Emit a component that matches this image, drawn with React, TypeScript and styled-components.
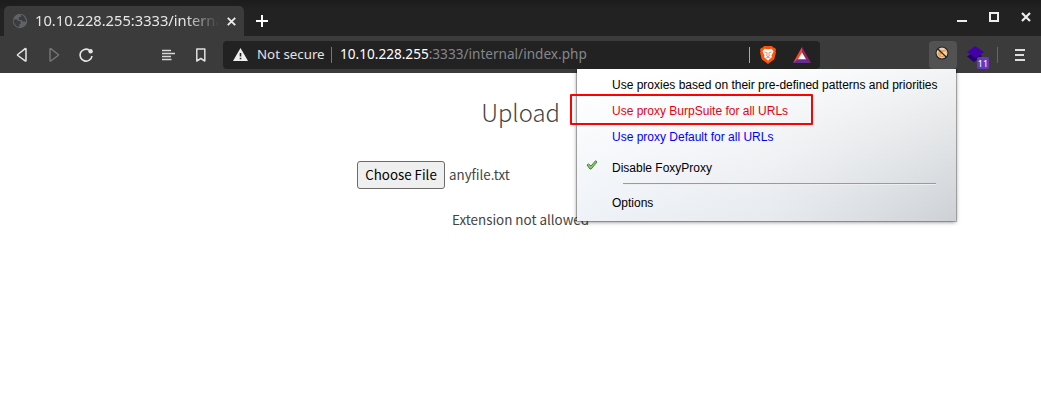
import React from 'react';
import styled, { createGlobalStyle } from 'styled-components';

const GlobalStyle = createGlobalStyle`
  * { box-sizing: border-box; }
  html, body, #root { height: 100%; }
  body { margin: 0; background: #fff; overflow: hidden; font-family: "Noto Sans", sans-serif; }
  svg { display: block; flex: none; }
`;

const Browser = styled.div`
  position: relative;
  width: 1041px;
  height: 415px;
  background: #fff;
`;

const TabStrip = styled.div`
  display: flex;
  align-items: flex-end;
  height: 36px;
  padding-left: 4px;
  background: linear-gradient(#1c1c1c, #222 10px, #222);
`;

const Tab = styled.div`
  display: flex;
  align-items: center;
  width: 240px;
  height: 30px;
  padding: 0 6px 0 8px;
  border-radius: 5px 5px 0 0;
  background: #3b3b3b;
`;

const TabTitle = styled.div`
  width: 185px;
  margin: 0 7px 2px 7px;
  white-space: nowrap;
  font-size: 14.7px;
  line-height: 28px;
  color: #e6e6e6;
  mask-image: linear-gradient(to right, #000 150px, transparent 184px);
`;

const NewTab = styled.div`
  margin: 0 auto 9px 12px;
`;

const WindowButtons = styled.div`
  display: flex;
  gap: 20px;
  padding: 0 9px 12px 0;
`;

const Toolbar = styled.div`
  display: flex;
  align-items: center;
  height: 37px;
  padding: 0 12px 0 14px;
  background: #3b3b3b;
`;

const NavButtons = styled.div`
  display: flex;
  align-items: center;
  gap: 16px;
`;

const PageButtons = styled(NavButtons)`
  margin: 0 14px 0 66px;
`;

const AddressBar = styled.div`
  display: flex;
  align-items: center;
  width: 597px;
  height: 28px;
  padding: 0 9px 0 10px;
  border-radius: 4px;
  background: #222;
  line-height: 26px;
  white-space: nowrap;
`;

const Security = styled.span`
  flex: none;
  width: 74px;
  margin: 0 0 2px 9px;
  color: #e4e4e4;
  font-size: 13.3px;
`;

const Separator = styled.span<{ $tone: string }>`
  flex: none;
  width: 1px;
  height: 16px;
  background: ${(p) => p.$tone};
`;

const Url = styled.span`
  flex: 1;
  margin: 0 0 2px 8px;
  color: #85878a;
  font-size: 13.6px;
`;

const Host = styled.span`
  color: #fff;
`;

const Shields = styled.div`
  display: flex;
  align-items: center;
  gap: 17px;
  margin-left: 10px;
`;

const Extensions = styled.div`
  display: flex;
  align-items: center;
  margin-left: auto;
`;

const ExtensionButton = styled.div`
  display: flex;
  align-items: center;
  justify-content: center;
  width: 28px;
  height: 28px;
  padding: 0 2px 3px 0;
  border-radius: 4px;
  background: #525252;
`;

const BadgedIcon = styled.div`
  position: relative;
  width: 23px;
  height: 28px;
  padding-top: 5px;
  margin: 0 7px 0 10px;
`;

const Badge = styled.span`
  position: absolute;
  left: 10px;
  top: 16px;
  width: 12px;
  height: 12px;
  border-radius: 2px;
  background: #6739b7;
  color: #fff;
  font: 9px/13px "Noto Sans", sans-serif;
  text-align: center;
`;

const MenuIcon = styled.div`
  margin: 0 4px 0 17px;
`;

const Page = styled.main`
  display: flex;
  flex-direction: column;
  align-items: center;
  padding-top: 21px;
  font-family: "Noto Sans CJK JP", sans-serif;
  color: #444;
`;

const Heading = styled.h1`
  margin: 0;
  font-size: 23.8px;
  line-height: 36px;
  font-weight: 300;
`;

const FileField = styled.div`
  display: flex;
  align-items: center;
  gap: 4px;
  width: 327px;
  margin-top: 31px;
  font-size: 13.333px;
  line-height: 26px;
`;

const FileButton = styled.button`
  width: 88px;
  height: 28px;
  padding: 0;
  border: 1px solid #6b6b6b;
  border-radius: 3px;
  background: #efefef;
  color: #000;
  font: 13.333px/24px "Noto Sans CJK JP", sans-serif;
  white-space: nowrap;
`;

const Message = styled.p`
  margin: 17px 0 0;
  font-size: 13.4px;
  line-height: 26px;
`;

const Popup = styled.div`
  position: absolute;
  left: 577px;
  top: 69px;
  width: 379px;
  height: 152px;
  padding-top: 3px;
  background: linear-gradient(170deg, #fff 8%, rgba(255, 255, 255, 0) 100%),
    linear-gradient(to right, #e6ecf4, #e2e6eb 50%, #cdd1d5);
  box-shadow: 0 0 0 1px rgba(0, 0, 0, 0.22), 0 1px 4px rgba(0, 0, 0, 0.5);
  clip-path: inset(0 -8px -8px -8px);
  font-family: "Liberation Sans", Arial, sans-serif;
  font-size: 12px;
`;

const MenuItem = styled.div<{ $color?: string; $gap?: number }>`
  display: flex;
  align-items: center;
  height: 26px;
  margin-top: ${(p) => p.$gap ?? 0}px;
  color: ${(p) => p.$color ?? '#000'};
  white-space: nowrap;
`;

const Mark = styled.span`
  width: 35px;
  padding: 0 0 7px 9px;
`;

const Rule = styled.hr`
  width: 313px;
  height: 2px;
  margin: 2px 0 0 46px;
  border: 0;
  border-top: 1px solid #9a9a9a;
  border-bottom: 1px solid #eee;
`;

const Highlight = styled.div`
  position: absolute;
  left: 570px;
  top: 94px;
  width: 243px;
  height: 31px;
  border: 2px solid #f00;
  border-radius: 1px;
`;

const Globe = () => (
  <svg width="16" height="16" viewBox="0 0 16 16">
    <circle cx="8" cy="8" r="7.2" fill="#5f6368" />
    <path d="M1.8 6.6h3.1l1.8 1.7h2v2.1l-1.4 1v2.6C4.3 14 1.2 10.8 1.8 6.6ZM8.8 1.7l.4 2-1.7.4-1 1.5.8 1.3h2.4l1 1.5 3.2.4c.3-2.6-1.8-6.7-5.1-7.1Z" fill="#3b3b3b" />
  </svg>
);

const Brave = () => (
  <svg width="16" height="18" viewBox="0 0 16 18">
    <path d="m4 0-1.2 1.6L.9 2 0 4l.6 1.6L0 6l1.7 7.2L8 18l6.3-4.8L16 6l-.6-.4L16 4l-.9-2-1.9-.4L12 0Z" fill="#fb5410" />
    <path d="M4.5 2.7 8 3.2l3.5-.5 2 2.5-.9 2-1.2 2.5.7 1.2-2.3 2L8 14.7l-1.8-1.8-2.3-2 .7-1.2-1.2-2.5-.9-2Z" fill="#fff" />
    <path d="m4.5 6 2.3.6.3 1.2-.5 2L8 10.6l1.4-.8-.5-2 .3-1.2 2.3-.6M6 12l2-.8 2 .8" fill="none" stroke="#fb5410" strokeWidth=".7" />
  </svg>
);

const Rewards = () => (
  <svg width="18" height="16" viewBox="0 0 18 16">
    <path d="M9 0 0 16l6-4 3-6Z" fill="#ff4724" />
    <path d="m9 0 9 16-5.5-4L9 6Z" fill="#9e1f63" />
    <path d="M0 16h18l-5-4H5Z" fill="#662d91" />
    <path d="m9 5.5 4 6.8H5Z" fill="#fff" />
  </svg>
);

const Fox = () => (
  <svg width="14" height="14" viewBox="0 0 14 14">
    <circle cx="7" cy="7" r="6" fill="#ddd6c8" stroke="#252525" strokeWidth="1.1" />
    <path d="M3.4 2.5 6 4h3l2-.8.6 3-1.2 3.1-2.1 2.3-3.7-.5L2.2 8l1.5-1.8Z" fill="#f0a04c" />
    <path d="m8 6 3-1v3L8.5 9.8 5.5 10" fill="#fff" fillOpacity=".5" />
    <path d="m2.6 2.8 8.8 8.5" stroke="#252525" strokeWidth="1.2" />
  </svg>
);

const Layers = () => (
  <svg width="17" height="16" viewBox="0 0 17 16">
    <path d="m0 10.5 7 5.5 8-6-3-2H4Z" fill="#24006b" />
    <path d="m8 0 9 6-8.5 6L0 6.2Z" fill="#4300a8" />
  </svg>
);

export default function App() {
  return (
    <Browser>
      <GlobalStyle />
      <TabStrip>
        <Tab>
          <Globe />
          <TabTitle>10.10.228.255:3333/interna</TabTitle>
          <svg width="9" height="9" viewBox="0 0 9 9" stroke="#eee" strokeWidth="1.8">
            <path d="m.8.8 7.4 7.4m0-7.4L.8 8.2" />
          </svg>
        </Tab>
        <NewTab>
          <svg width="12" height="12" viewBox="0 0 12 12" stroke="#fff" strokeWidth="2">
            <path d="M6 0v12M0 6h12" />
          </svg>
        </NewTab>
        <WindowButtons>
          <svg width="12" height="14" viewBox="0 0 12 14"><path d="M1 10h10v2H1z" fill="#eee" /></svg>
          <svg width="12" height="14" viewBox="0 0 12 14"><path d="M2 3h8v8H2z" fill="none" stroke="#eee" strokeWidth="2" /></svg>
          <svg width="12" height="14" viewBox="0 0 12 14"><path d="m2 3 8 8m0-8-8 8" stroke="#eee" strokeWidth="2.2" /></svg>
        </WindowButtons>
      </TabStrip>
      <Toolbar>
        <NavButtons>
          <svg width="16" height="16" viewBox="0 0 16 16" fill="none" stroke="#e6e6e6" strokeWidth="1.5" strokeLinejoin="round"><path d="M12 2.2v11.3q0 .8-.8.3L3.8 8.5q-.6-.5 0-1l7.4-5.8q.8-.5.8.5Z" /></svg>
          <svg width="16" height="16" viewBox="0 0 16 16" fill="none" stroke="#747474" strokeWidth="1.5" strokeLinejoin="round"><path d="M4 2.2v11.3q0 .8.8.3l7.4-5.3q.6-.5 0-1L4.8 1.7Q4 1.2 4 2.2Z" /></svg>
          <svg width="16" height="16" viewBox="0 0 16 16"><path d="M11.2 3A6 6 0 1 0 14 9" fill="none" stroke="#e6e6e6" strokeWidth="1.6" /><circle cx="12.6" cy="4.3" r="2.2" fill="#e6e6e6" /></svg>
        </NavButtons>
        <PageButtons>
          <svg width="16" height="16" viewBox="0 0 16 16" stroke="#d8d8d8" strokeWidth="1.3"><path d="M2 3.5h9M2 6.5h13M2 9.5h9M2 12.5h9.5" /></svg>
          <svg width="17" height="16" viewBox="0 0 17 16" fill="none" stroke="#e0e0e0" strokeWidth="1.5" strokeLinejoin="round"><path d="M4.8 2h8v12l-4-2.5-4 2.5Z" /></svg>
        </PageButtons>
        <AddressBar>
          <svg width="15" height="14" viewBox="0 0 15 14"><path d="M7.5 0 15 13H0Z" fill="#eee" /><path d="M6.7 5h1.6v3.5H6.7zm0 4.7h1.6v1.6H6.7z" fill="#222" /></svg>
          <Security>Not secure</Security>
          <Separator $tone="#777" />
          <Url><Host>10.10.228.255</Host>:3333/internal/index.php</Url>
          <Separator $tone="#aaa" />
          <Shields><Brave /><Rewards /></Shields>
        </AddressBar>
        <Extensions>
          <ExtensionButton><Fox /></ExtensionButton>
          <BadgedIcon><Layers /><Badge>11</Badge></BadgedIcon>
          <Separator $tone="#666" />
          <MenuIcon>
            <svg width="10" height="12" viewBox="0 0 10 12" fill="#ddd"><path d="M0 0h10v2H0zm0 5h9v2H0zm0 5h10v2H0z" /></svg>
          </MenuIcon>
        </Extensions>
      </Toolbar>
      <Page>
        <Heading>Upload</Heading>
        <FileField>
          <FileButton>Choose File</FileButton>
          <span>anyfile.txt</span>
        </FileField>
        <Message>Extension not allowed</Message>
      </Page>
      <Popup>
        <MenuItem><Mark />Use proxies based on their pre-defined patterns and priorities</MenuItem>
        <MenuItem $color="#e60012"><Mark />Use proxy BurpSuite for all URLs</MenuItem>
        <MenuItem $color="#00f"><Mark />Use proxy Default for all URLs</MenuItem>
        <MenuItem $gap={5}>
          <Mark>
            <svg width="12" height="10" viewBox="0 0 12 10"><path d="m1 5 1.5-1L5 6l4.6-5.3L11 2 5.2 9H4Z" fill="#8cc96d" stroke="#47843a" strokeWidth="1" /></svg>
          </Mark>
          Disable FoxyProxy
        </MenuItem>
        <Rule />
        <MenuItem $gap={5}><Mark />Options</MenuItem>
      </Popup>
      <Highlight />
    </Browser>
  );
}
